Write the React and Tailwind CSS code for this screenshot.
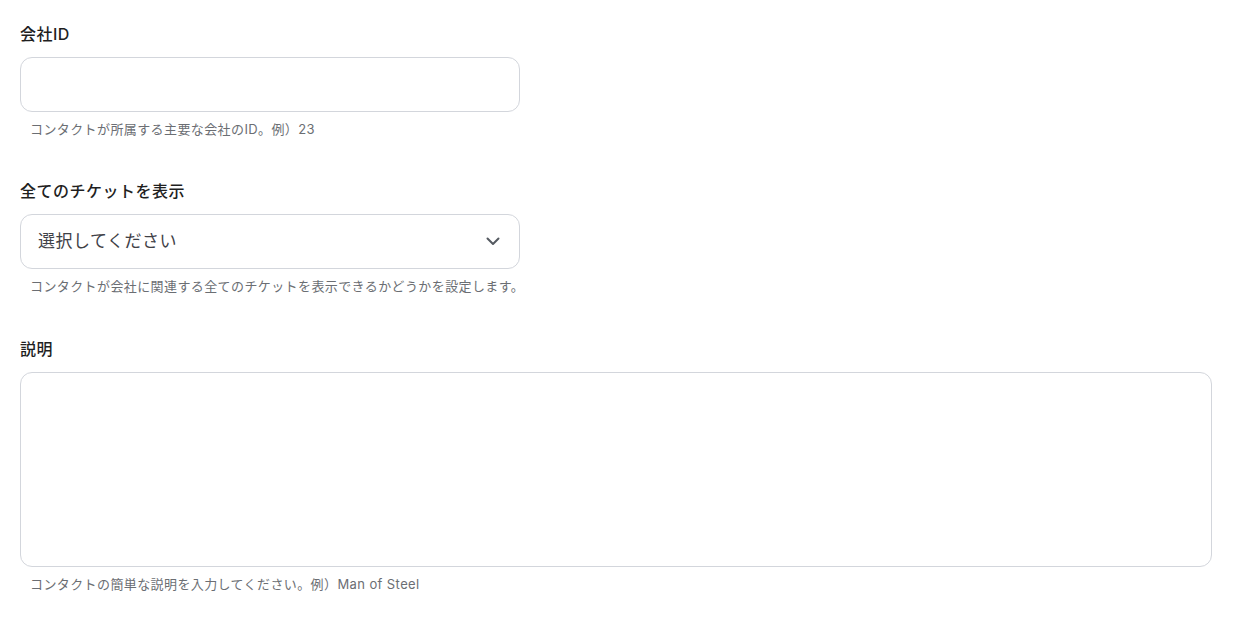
const font = "font-['Inter','Noto_Sans_CJK_JP',sans-serif]"

function Field({ label, help, children }) {
  return (
    <div className="flex flex-col">
      <label className="text-[16px] leading-6 font-medium tracking-[0.5px] text-[#1f1f1f] mb-[11px]">{label}</label>
      {children}
      <p className="mt-[7px] pl-[10px] whitespace-nowrap text-[13px] leading-5 tracking-[0.4px] text-[#6b6e73]">{help}</p>
    </div>
  )
}

export default function App() {
  return (
    <div className={`${font} bg-white min-h-[620px] w-[1251px] pl-5 pr-10 pt-[22px]`}>
      <div className="flex flex-col">
        <div className="w-[500px]">
          <Field label="会社ID" help="コンタクトが所属する主要な会社のID。例）23">
            <input
              type="text"
              className="h-[55px] w-full rounded-xl border border-[#d3d6dc] bg-white px-4 outline-none"
            />
          </Field>
        </div>

        <div className="w-[500px] mt-10">
          <Field label="全てのチケットを表示" help="コンタクトが会社に関連する全てのチケットを表示できるかどうかを設定します。">
            <div className="h-[55px] w-full rounded-xl border border-[#d3d6dc] bg-white pl-[17px] pr-[19px] flex items-center justify-between">
              <span className="text-[17px] tracking-[0.5px] text-[#3f4147]">選択してください</span>
              <svg width="14" height="9" viewBox="0 0 14 9" fill="none">
                <path d="M1.5 1.5 L7 7 L12.5 1.5" stroke="#555a61" strokeWidth="2" strokeLinecap="round" strokeLinejoin="round" />
              </svg>
            </div>
          </Field>
        </div>

        <div className="w-[1192px] mt-[41px]">
          <Field label="説明" help="コンタクトの簡単な説明を入力してください。例）Man of Steel">
            <textarea className="h-[195px] w-full resize-none rounded-xl border border-[#d3d6dc] bg-white px-4 py-3 outline-none" />
          </Field>
        </div>
      </div>
    </div>
  )
}
